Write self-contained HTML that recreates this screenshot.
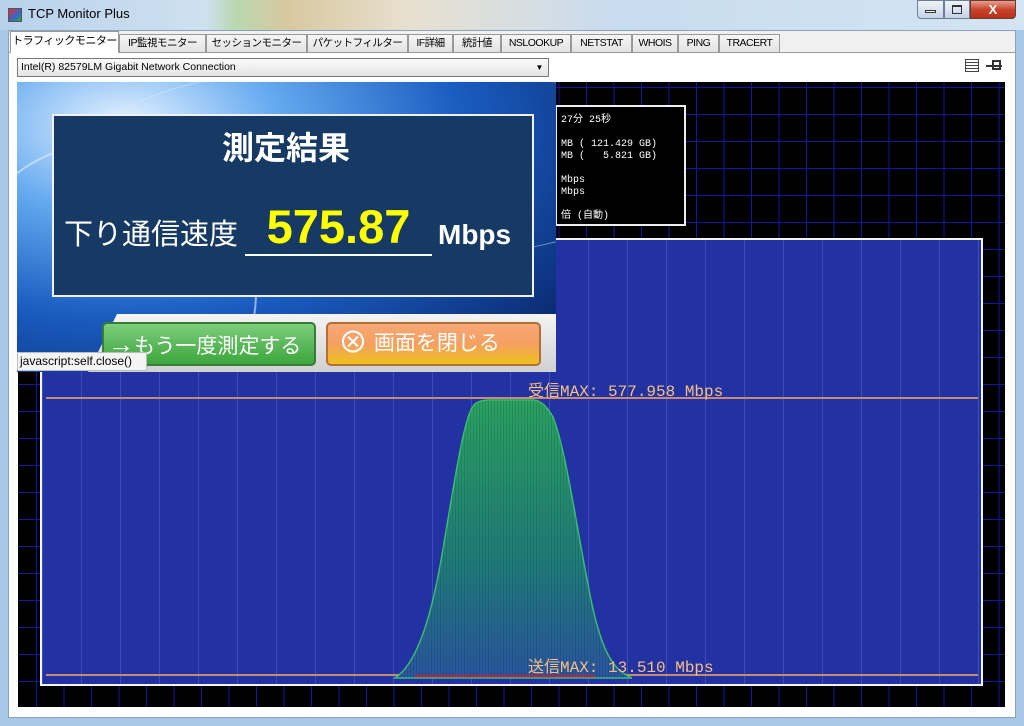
<!DOCTYPE html>
<html><head><meta charset="utf-8"><style>
*{margin:0;padding:0;box-sizing:border-box}
body{width:1024px;height:726px;overflow:hidden;background:#a9c7e6;font-family:"Liberation Sans","Noto Sans CJK JP",sans-serif;position:relative}
.abs{position:absolute}
#title{left:0;top:0;width:1024px;height:30px;background:linear-gradient(90deg,#b8d2ec,#cfe0f0 20%,#b8d8b0 23%,#d8c8a0 28%,#e8e0d0 40%,#c8dcef 60%,#d4e4f3);}
#client{left:8px;top:30px;width:1008px;height:688px;background:#f0f0f0;border:1px solid #8aa3bd}
.tab{position:absolute;top:34px;height:18px;border:1px solid #999;border-bottom:none;background:linear-gradient(#f6f6f6,#e2e2e2);font-size:10.5px;line-height:16px;text-align:center;color:#000;white-space:nowrap;overflow:hidden;letter-spacing:-0.5px}
#black{left:18px;top:82px;width:987px;height:625px;background-color:#000;
background-image:linear-gradient(90deg,#16169a 1px,transparent 1px),linear-gradient(#16169a 1px,transparent 1px);background-size:27.5px 27px;background-position:18px 5px}
#panel{left:40px;top:238px;width:943px;height:448px;border:2px solid #f4f4f4;background-color:#2232a2;
background-image:linear-gradient(90deg,rgba(120,140,230,.3) 1px,transparent 1px);background-size:39px 100%}
.mono{font-family:"Liberation Mono","Noto Sans CJK JP",monospace}
</style></head><body>
<div id="title" class="abs"></div>
<div class="abs" style="left:8px;top:8px;width:14px;height:14px;background:linear-gradient(135deg,#d33,#36c 60%,#3a3);border:1px solid #555"></div>
<div class="abs" style="left:28px;top:6px;font-size:13px;color:#000">TCP Monitor Plus</div>
<div class="abs" style="left:917px;top:0;width:27px;height:19px;border:1px solid #6d7f94;border-radius:0 0 0 4px;background:linear-gradient(#eef3f9,#c5d4e6)"></div>
<div class="abs" style="left:925px;top:10px;width:11px;height:3px;border:1px solid #333;background:#fff"></div>
<div class="abs" style="left:944px;top:0;width:26px;height:19px;border:1px solid #6d7f94;background:linear-gradient(#eef3f9,#c5d4e6)"></div>
<div class="abs" style="left:952px;top:5px;width:10px;height:9px;border:1px solid #333;border-top-width:2px"></div>
<div class="abs" style="left:970px;top:0;width:46px;height:19px;border:1px solid #6d3a30;border-radius:0 0 4px 0;background:linear-gradient(#e8a090,#c8442c 50%,#b83018);color:#fff;font-weight:bold;font-size:13px;text-align:center;line-height:17px">X</div>
<div id="client" class="abs"></div>
<div class="tab" style="left:119px;width:87px">IP監視モニター</div>
<div class="tab" style="left:206px;width:101px">セッションモニター</div>
<div class="tab" style="left:307px;width:101px">パケットフィルター</div>
<div class="tab" style="left:408px;width:45px">IF詳細</div>
<div class="tab" style="left:453px;width:48px">統計値</div>
<div class="tab" style="left:501px;width:70px">NSLOOKUP</div>
<div class="tab" style="left:571px;width:61px">NETSTAT</div>
<div class="tab" style="left:632px;width:46px">WHOIS</div>
<div class="tab" style="left:678px;width:41px">PING</div>
<div class="tab" style="left:719px;width:61px">TRACERT</div>
<div class="abs" style="left:9px;top:52px;width:1006px;height:665px;background:#fff;border-top:1px solid #999"></div>
<div class="tab" style="left:10px;top:31px;width:109px;height:22px;background:#fff;font-size:11px;line-height:18px;border-bottom:none">トラフィックモニター</div>
<div class="abs" style="left:17px;top:58px;width:532px;height:19px;border:1px solid #777;background:linear-gradient(#fafafa,#e4e4e4);font-size:10.5px;line-height:17px;padding-left:3px">Intel(R) 82579LM Gigabit Network Connection</div>
<div class="abs" style="left:531px;top:59px;width:17px;height:17px;font-size:8px;text-align:center;line-height:17px">▼</div>
<div class="abs" style="left:965px;top:59px;width:14px;height:13px;border:1px solid #444;background:repeating-linear-gradient(#fff 0 2px,#444 2px 3px)"></div>
<div class="abs" style="left:986px;top:65px;width:16px;height:2px;background:#333"></div>
<div class="abs" style="left:992px;top:60px;width:9px;height:10px;border:2px solid #333"></div>
<div id="black" class="abs"></div>
<div class="abs mono" style="left:555px;top:105px;width:131px;height:121px;border:2px solid #eee;background:#000;color:#fff;font-size:10px;line-height:12px;padding:8px 0 0 4px;white-space:pre">27分 25秒

MB ( 121.429 GB)
MB (   5.821 GB)

Mbps
Mbps

倍 (自動)</div>
<div id="panel" class="abs"></div>
<div class="abs" style="left:46px;top:397px;width:932px;height:2px;background:#c88a70"></div>
<div class="abs" style="left:46px;top:674px;width:932px;height:2px;background:#c88a70"></div>
<svg class="abs" style="left:380px;top:395px" width="270" height="290">
<defs><linearGradient id="g" x1="0" y1="0" x2="0" y2="1"><stop offset="0" stop-color="#2aa060"/><stop offset=".6" stop-color="#1f7a7a"/><stop offset="1" stop-color="#2a55a0"/></linearGradient>
<pattern id="p" width="3" height="10" patternUnits="userSpaceOnUse"><rect width="1" height="10" fill="rgba(0,0,0,.12)"/></pattern></defs>
<path d="M15 283 C35 270 50 230 62 160 C74 90 84 20 94 10 C99 5 106 5 112 5 L152 5 C160 5 166 10 173 22 C186 55 196 130 210 200 C222 260 234 275 252 283 Z" fill="url(#g)" stroke="#3cc070" stroke-width="1.5"/>
<path d="M15 283 C35 270 50 230 62 160 C74 90 84 20 94 10 C99 5 106 5 112 5 L152 5 C160 5 166 10 173 22 C186 55 196 130 210 200 C222 260 234 275 252 283 Z" fill="url(#p)"/>
<rect x="35" y="280" width="180" height="2" fill="#c02040"/>
</svg>
<div class="abs mono" style="left:528px;top:377px;color:#f8c080;font-size:16px">受信MAX: 577.958 Mbps</div>
<div class="abs mono" style="left:528px;top:653px;color:#f8c080;font-size:16px">送信MAX:  13.510 Mbps</div>
<!-- popup -->
<div class="abs" style="left:17px;top:82px;width:539px;height:290px;background:radial-gradient(ellipse at 20% 15%,#e8f4ff,#66aaf0 25%,#1a5cc0 55%,#0a2a70 90%);overflow:hidden">
<div class="abs" style="left:-60px;top:60px;width:300px;height:300px;border:2px solid rgba(220,240,255,.6);border-radius:50%"></div>
<div class="abs" style="left:60px;top:-20px;width:600px;height:200px;border:1px solid rgba(220,240,255,.5);border-radius:50%"></div>
<div class="abs" style="left:35px;top:32px;width:482px;height:183px;background:#173a64;border:2px solid #f0f0f0"></div>
<div class="abs" style="left:205px;top:46px;color:#fff;font-size:32px;font-weight:bold;line-height:40px">測定結果</div>
<div class="abs" style="left:47px;top:136px;color:#fff;font-size:29px;line-height:34px">下り通信速度</div>
<div class="abs" style="left:228px;top:118px;width:187px;text-align:center;color:#ff0;font-size:47px;font-weight:bold;line-height:54px;border-bottom:2px solid #fff">575.87</div>
<div class="abs" style="left:421px;top:136px;color:#fff;font-size:28px;font-weight:bold;line-height:34px">Mbps</div>
<div class="abs" style="left:70px;top:232px;width:480px;height:60px;background:linear-gradient(#f4f4f4,#cfcfcf);clip-path:polygon(30px 0,100% 0,100% 100%,0 100%)"></div>
<div class="abs" style="left:85px;top:240px;width:214px;height:44px;border:2px solid #3a7a3a;border-radius:5px;background:linear-gradient(#7cd07c,#5cb85c 50%,#3ca83c);color:#fff;font-size:21px;line-height:40px;padding-left:4px"><span style="font-size:26px">→</span>もう一度測定する</div>
<div class="abs" style="left:309px;top:240px;width:215px;height:44px;border:2px solid #b0703a;border-radius:5px;background:linear-gradient(#f8a878,#f4a060 50%,#f0c020);color:#fff;font-size:21px;line-height:40px;padding-left:10px"><span style="font-size:30px;vertical-align:-3px">⊗</span> 画面を閉じる</div>
</div>
<div class="abs" style="left:17px;top:352px;width:130px;height:19px;background:#f4f4f4;border:1px solid #bbb;font-size:12px;line-height:17px;padding-left:2px">javascript:self.close()</div>
</body></html>
